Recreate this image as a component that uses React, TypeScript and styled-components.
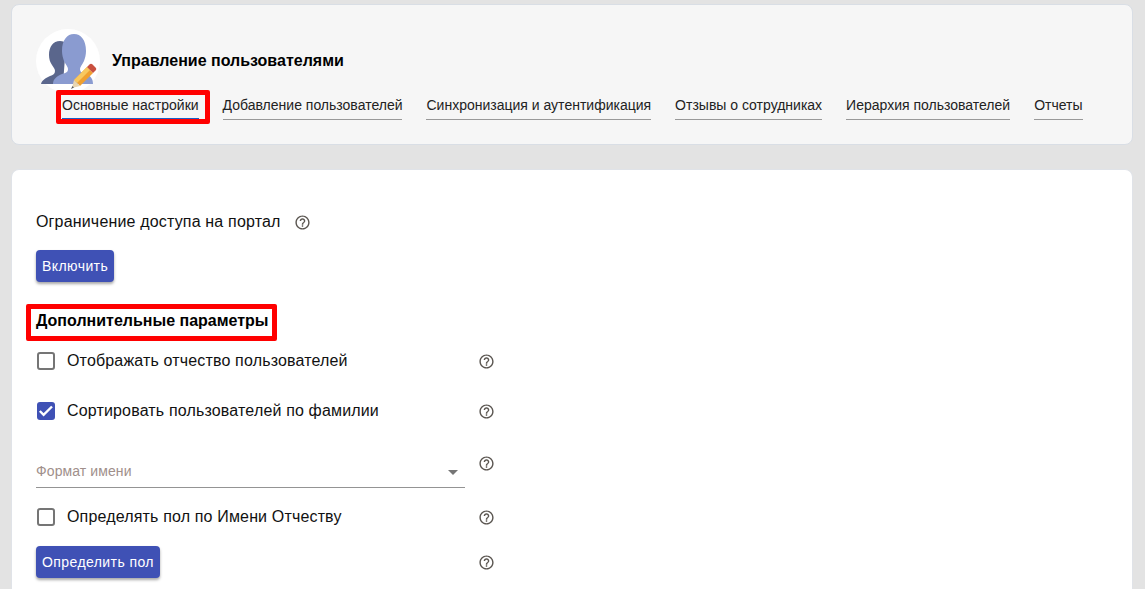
import styled, {createGlobalStyle} from 'styled-components';
import {MdHelpOutline} from 'react-icons/md';

const tabs = [
	'Основные настройки',
	'Добавление пользователей',
	'Синхронизация и аутентификация',
	'Отзывы о сотрудниках',
	'Иерархия пользователей',
	'Отчеты',
];

const GlobalStyle = createGlobalStyle`
	html, body {
		margin: 0;
		height: 100%;
		overflow: hidden;
		background: #e3e3e3;
		font-family: 'Liberation Sans', Arial, sans-serif;
		color: #111;
	}
`;
const Page = styled.div`
	display: flex;
	flex-direction: column;
	gap: 24px;
	height: 589px;
	box-sizing: border-box;
	padding: 4px 12px 0 11px;
	overflow: hidden;
`;
const HeaderCard = styled.header`
	box-sizing: border-box;
	height: 141px;
	padding: 24px 24px 0;
	background: #f6f6f6;
	border: 1px solid #d9dee5;
	border-radius: 8px;
`;
const TitleRow = styled.div`
	display: flex;
	align-items: center;
	gap: 12px;
	height: 64px;
`;
const Avatar = styled.div`
	width: 64px;
	height: 64px;
	flex: none;
	border-radius: 50%;
	background: #fff;
`;
const Title = styled.h1`
	margin: 0;
	font-size: 16px;
	font-weight: 700;
	color: #000;
`;
const TabList = styled.nav`
	display: flex;
	gap: 24px;
	margin: 0 0 0 26px;
`;
const Tab = styled.a<{$active?: boolean}>`
	position: relative;
	display: block;
	height: 27px;
	box-sizing: border-box;
	padding-top: 4px;
	font-size: 14px;
	line-height: 16px;
	white-space: nowrap;
	color: #222;
	border-bottom: ${(props) =>
		props.$active ? '2px solid #1a5fc8' : '1px solid #999'};
`;
const Marker = styled.span`
	position: absolute;
	border: 5px solid #f00;
	border-radius: 2px;
	pointer-events: none;
`;
const TabMarker = styled(Marker)`
	inset: -3px -11px -6px -6px;
`;
const BodyCard = styled.main`
	flex: 1;
	padding: 40px 24px 0;
	background: #fff;
	border: 1px solid #e0e3e8;
	border-bottom: none;
	border-radius: 8px 8px 0 0;
`;
const AccessRow = styled.div`
	display: flex;
	align-items: center;
	gap: 13px;
	height: 24px;
	font-size: 16px;
	letter-spacing: 0.17px;
`;
const Button = styled.button`
	display: block;
	height: 32px;
	padding: 0 6px;
	border: none;
	border-radius: 4px;
	background: #3f51b5;
	color: #fff;
	font-family: inherit;
	font-size: 14px;
	letter-spacing: 0.42px;
	box-shadow: 0 2px 3px rgba(0, 0, 0, 0.35);
`;
const AccessButton = styled(Button)`
	margin-top: 16px;
`;
const SectionTitle = styled.h2`
	position: relative;
	width: fit-content;
	margin: 27px 0 3px;
	font-size: 16px;
	line-height: 24px;
	font-weight: 700;
	color: #000;
`;
const SectionMarker = styled(Marker)`
	inset: -5px -8px -8px -10px;
`;
const Row = styled.div<{$height?: number}>`
	display: grid;
	grid-template-columns: 429px 30px;
	align-items: center;
	height: ${(props) => props.$height ?? 50}px;
`;
const CheckLabel = styled.label`
	display: flex;
	align-items: center;
	gap: 12px;
	padding-left: 1px;
	font-size: 16px;
	letter-spacing: 0.16px;
`;
const Box = styled.span<{$checked?: boolean}>`
	display: flex;
	width: 18px;
	height: 18px;
	box-sizing: border-box;
	border-radius: 3px;
	border: ${(props) => (props.$checked ? 'none' : '2px solid #757575')};
	background: ${(props) => (props.$checked ? '#3f51b5' : '#fff')};
`;
const HelpSlot = styled.span`
	display: flex;
	justify-content: flex-end;
`;
const SelectRow = styled(Row)`
	height: 52px;
	margin-bottom: 4px;
	align-items: start;
`;
const SelectField = styled.div`
	display: flex;
	align-items: center;
	justify-content: space-between;
	box-sizing: border-box;
	height: 31px;
	margin-top: 21px;
	padding: 0 7px 2px 0;
	border-bottom: 1px solid #949494;
	font-size: 14px;
	letter-spacing: 0.1px;
	color: #a08f8b;
`;
const Arrow = styled.span`
	width: 0;
	height: 0;
	margin-top: 3px;
	border-left: 5px solid transparent;
	border-right: 5px solid transparent;
	border-top: 5px solid #757575;
`;
const SelectHelp = styled(HelpSlot)`
	margin-top: 19px;
`;
const ButtonRow = styled(Row)`
	height: 32px;
	margin-top: 4px;
`;

function Help() {
	return <MdHelpOutline size={17} color="#5a5550" />;
}

function CheckMark() {
	return (
		<svg width="18" height="18" viewBox="0 0 18 18">
			<path d="M2.8 9l3.8 3.8L15 4.5" fill="none" stroke="#fff" strokeWidth="2.4" />
		</svg>
	);
}

function UsersIcon() {
	return (
		<svg width="64" height="64" viewBox="0 0 64 64">
			<path
				fill="#5a668c"
				d="M5 55c1-4 5-6 9-8 3-1 5-2 5-5 0-2-1-3-3-6-2-3-3-6-3-10 0-8 4-14 11-14 3 0 5 1 6 3l-3 40z"
			/>
			<path
				fill="#8a9bd0"
				d="M17 55c0-5 4-8 9-10 4-1 6-2 6-5 0-2-2-4-4-8-1-3-2-6-2-10C26 11 31 5 38 5s12 6 12 17c0 4-1 7-2 10-2 4-4 6-4 8 0 3 2 4 6 5 5 2 7 5 7 10z"
			/>
			<path fill="#f0a030" d="M38 51l6 6 13-13-6-6z" />
			<path fill="#f8c860" d="M38 51l3 3 13-13-3-3z" />
			<path fill="#c9503f" d="M51 38l6 6 2.500-2.500c1-1 1-2 0-3l-3-3c-1-1-2-1-3 0z" />
			<path fill="#e8d5b0" d="M38 51l6 6-6 1.500-1.500-1.500z" />
			<path fill="#555" d="M35 60l1.500-3 1.500 1.500z" />
		</svg>
	);
}

export default function App() {
	return (
		<>
			<GlobalStyle />
			<Page>
				<HeaderCard>
					<TitleRow>
						<Avatar>
							<UsersIcon />
						</Avatar>
						<Title>Управление пользователями</Title>
					</TitleRow>
					<TabList>
						{tabs.map((tab, index) => (
							<Tab key={tab} $active={index === 0}>
								{tab}
								{index === 0 && <TabMarker />}
							</Tab>
						))}
					</TabList>
				</HeaderCard>
				<BodyCard>
					<AccessRow>
						Ограничение доступа на портал
						<Help />
					</AccessRow>
					<AccessButton>Включить</AccessButton>
					<SectionTitle>
						Дополнительные параметры
						<SectionMarker />
					</SectionTitle>
					<Row>
						<CheckLabel>
							<Box />
							Отображать отчество пользователей
						</CheckLabel>
						<HelpSlot>
							<Help />
						</HelpSlot>
					</Row>
					<Row>
						<CheckLabel>
							<Box $checked>
								<CheckMark />
							</Box>
							Сортировать пользователей по фамилии
						</CheckLabel>
						<HelpSlot>
							<Help />
						</HelpSlot>
					</Row>
					<SelectRow>
						<SelectField>
							Формат имени
							<Arrow />
						</SelectField>
						<SelectHelp>
							<Help />
						</SelectHelp>
					</SelectRow>
					<Row>
						<CheckLabel>
							<Box />
							Определять пол по Имени Отчеству
						</CheckLabel>
						<HelpSlot>
							<Help />
						</HelpSlot>
					</Row>
					<ButtonRow>
						<div>
							<Button>Определить пол</Button>
						</div>
						<HelpSlot>
							<Help />
						</HelpSlot>
					</ButtonRow>
				</BodyCard>
			</Page>
		</>
	);
}
